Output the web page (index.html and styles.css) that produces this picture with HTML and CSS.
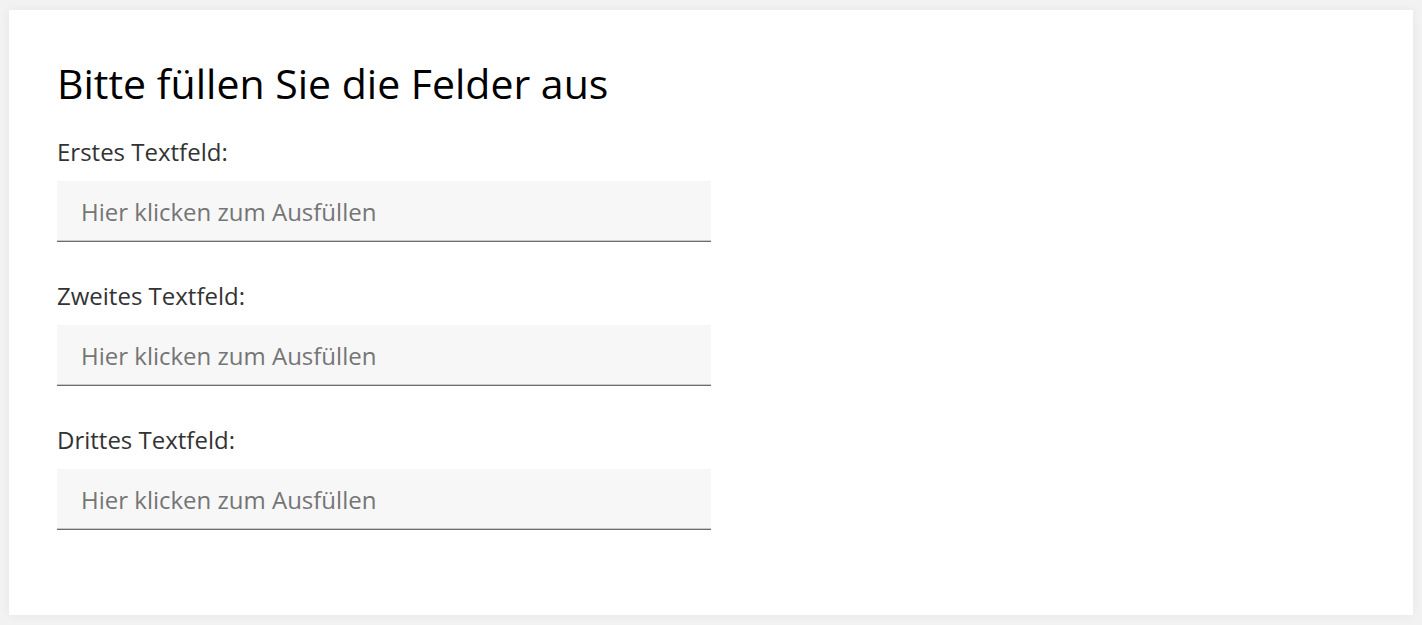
FILE: index.html
```html
<!DOCTYPE html>
<html lang="de">
<head>
  <meta charset="UTF-8">
  <meta name="viewport" content="width=device-width, initial-scale=1.0">
  <title>Textfelder</title>
  <link rel="stylesheet" href="styles.css">
</head>
<body>
  <div class="card">
    <h1>Bitte füllen Sie die Felder aus</h1>
    <form class="fields">
      <div class="field">
        <label for="f1">Erstes Textfeld:</label>
        <input type="text" id="f1" placeholder="Hier klicken zum Ausfüllen">
      </div>
      <div class="field">
        <label for="f2">Zweites Textfeld:</label>
        <input type="text" id="f2" placeholder="Hier klicken zum Ausfüllen">
      </div>
      <div class="field">
        <label for="f3">Drittes Textfeld:</label>
        <input type="text" id="f3" placeholder="Hier klicken zum Ausfüllen">
      </div>
    </form>
  </div>
</body>
</html>
```

FILE: styles.css
```css
body {
  margin: 0;
  padding: 10px 9px;
  background-color: #f2f2f2;
  font-family: "Open Sans", Arial, sans-serif;
  height: 100vh;
  box-sizing: border-box;
}
.card {
  background: #fff;
  height: 100%;
  box-sizing: border-box;
  padding: 47px 48px;
  box-shadow: 0 0 10px rgba(0,0,0,0.05);
}
h1 {
  margin: 0 0 27px;
  font-size: 41px;
  font-weight: 400;
  line-height: 52px;
  color: #000;
}
.fields {
  display: flex;
  flex-direction: column;
  gap: 38px;
}
.field label {
  display: block;
  font-size: 24px;
  line-height: 32px;
  color: #333;
  margin-bottom: 13px;
}
.field input {
  display: block;
  width: 654px;
  height: 61px;
  box-sizing: border-box;
  padding: 0 24px;
  border: none;
  border-bottom: 1px solid #6e6e6e;
  box-shadow: inset 0 -1px 0 #c8c8c8;
  background: #f7f7f7;
  font-family: inherit;
  font-size: 24px;
  color: #333;
  outline: none;
}
.field input::placeholder {
  color: #757575;
}
```
